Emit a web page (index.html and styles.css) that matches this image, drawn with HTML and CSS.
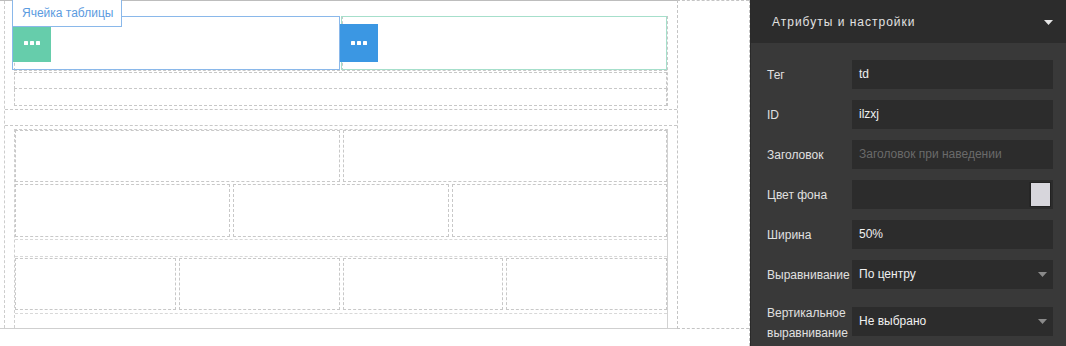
FILE: index.html
```html
<!DOCTYPE html>
<html lang="ru">
<head>
<meta charset="utf-8">
<title>Editor</title>
<link rel="stylesheet" href="styles.css">
</head>
<body>
<div class="app">
  <main class="canvas">
    <div class="frame">
      <div class="page">
        <div class="wrap">
          <section class="sec sec1">
            <div class="tbl tbl1">
              <div class="row row-main">
                <div class="cell">
                  <div class="sel sel-blue"></div>
                  <div class="tb tb-green">
                    <svg width="16" height="4" viewBox="0 0 16 4"><rect x="0" y="0" width="4" height="4" rx="0.6" fill="#fff"/><rect x="6" y="0" width="4" height="4" rx="0.6" fill="#fff"/><rect x="12" y="0" width="4" height="4" rx="0.6" fill="#fff"/></svg>
                  </div>
                </div>
                <div class="cell">
                  <div class="sel sel-green"></div>
                  <div class="tb tb-blue">
                    <svg width="16" height="4" viewBox="0 0 16 4"><rect x="0" y="0" width="4" height="4" rx="0.6" fill="#fff"/><rect x="6" y="0" width="4" height="4" rx="0.6" fill="#fff"/><rect x="12" y="0" width="4" height="4" rx="0.6" fill="#fff"/></svg>
                  </div>
                </div>
              </div>
              <div class="row-empty"></div>
              <div class="row-empty"></div>
            </div>
          </section>
          <section class="sec sec2">
            <div class="tbl tbl2">
              <div class="row r1">
                <div class="cell"></div><div class="cell"></div>
              </div>
              <div class="row r2">
                <div class="cell"></div><div class="cell"></div><div class="cell"></div>
              </div>
              <div class="row-blank"></div>
              <div class="row r3">
                <div class="cell"></div><div class="cell"></div><div class="cell"></div><div class="cell"></div>
              </div>
              <div class="row-tail"></div>
            </div>
          </section>
        </div>
      </div>
      <div class="gutter"></div>
    </div>
    <div class="badge">Ячейка таблицы</div>
  </main>

  <aside class="panel">
    <header class="panel-head">
      <span class="panel-title">Атрибуты и настройки</span>
      <svg class="caret-head" width="9" height="5" viewBox="0 0 9 5"><path d="M0 0 H9 L4.5 5 Z" fill="#e6e6e6"/></svg>
    </header>
    <div class="panel-body">
      <div class="field">
        <label class="lbl">Тег</label>
        <div class="inp">td</div>
      </div>
      <div class="field">
        <label class="lbl">ID</label>
        <div class="inp">ilzxj</div>
      </div>
      <div class="field">
        <label class="lbl">Заголовок</label>
        <div class="inp ph">Заголовок при наведении</div>
      </div>
      <div class="field">
        <label class="lbl">Цвет фона</label>
        <div class="inp color"><span class="swatch"></span></div>
      </div>
      <div class="field">
        <label class="lbl">Ширина</label>
        <div class="inp">50%</div>
      </div>
      <div class="field">
        <label class="lbl">Выравнивание</label>
        <div class="inp sel-inp"><span>По центру</span><svg width="9" height="5" viewBox="0 0 9 5"><path d="M0 0 H9 L4.5 5 Z" fill="#8a8a8a"/></svg></div>
      </div>
      <div class="field field-tall">
        <label class="lbl lbl-two">Вертикальное выравнивание</label>
        <div class="inp sel-inp"><span>Не выбрано</span><svg width="9" height="5" viewBox="0 0 9 5"><path d="M0 0 H9 L4.5 5 Z" fill="#8a8a8a"/></svg></div>
      </div>
    </div>
  </aside>
</div>
</body>
</html>
```

FILE: styles.css
```css
* { box-sizing: border-box; }
html, body { margin: 0; padding: 0; }
body {
  width: 1066px;
  height: 346px;
  overflow: hidden;
  font-family: "Liberation Sans", Arial, sans-serif;
  background: #fff;
}
.app {
  display: flex;
  width: 1066px;
  height: 346px;
}

/* ---------- canvas ---------- */
.canvas {
  position: relative;
  width: 750px;
  height: 346px;
  background: #fff;
  border-right: 1px dashed #c4c4c4;
}
.frame {
  display: flex;
  height: 329px;
}
.page {
  width: 677px;
  height: 329px;
  border-top: 1px solid #bdbdbd;
  border-bottom: 1px solid #cfcfcf;
  padding-left: 4px;
  display: flex;
  flex-direction: column;
}
.gutter {
  width: 72px;
  height: 329px;
  border-left: 1px dashed #c4c4c4;
  border-top: 1px dashed #c4c4c4;
  border-bottom: 1px dashed #c4c4c4;
}
.wrap {
  flex: 1;
  border-left: 1px dashed #cdcdcd;
  display: flex;
  flex-direction: column;
}
.sec1 {
  height: 109px;
  padding: 15px 9px 0 9px;
  border-bottom: 1px dashed #c8c8c8;
}
.sec2 {
  margin-top: 15px;
  flex: 1;
  padding: 3px 9px 0 9px;
  border-top: 1px dashed #c8c8c8;
}
.tbl {
  display: flex;
  flex-direction: column;
}
.tbl1 {
  height: 90px;
  border-right: 1px dashed #c8c8c8;
}
.row {
  display: flex;
  gap: 3px;
}
.cell {
  position: relative;
  flex: 1;
  border: 1px dashed #c8c8c8;
}
.row-main { height: 55px; gap: 2px; }
.row-empty {
  height: 17px;
  border: 1px dashed #c8c8c8;
  border-top: none;
}
.tbl1 .row-main + .row-empty {
  margin-top: 1px;
  border-top: 1px dashed #c8c8c8;
}

.tbl2 {
  height: 199px;
  border-left: 1px dashed #cfcfcf;
  border-right: 1px solid #d2d2d2;
  border-top: 1px dashed #cfcfcf;
}
.r1 { height: 52px; }
.r2 { height: 53px; margin-top: 2px; }
.r3 { height: 52px; margin-top: 1px; }
.row-blank {
  height: 18px;
  margin-top: 2px;
  border-top: 1px dashed #d8d8d8;
  border-bottom: 1px dashed #d8d8d8;
}
.row-tail {
  flex: 1;
  margin-top: 3px;
  border-top: 1px dashed #d8d8d8;
}

/* overlays */
.sel {
  position: absolute;
  top: -1px;
  bottom: 0;
  pointer-events: none;
}
.sel-blue {
  left: -3px;
  right: -1px;
  border: 1px solid #8ab8ea;
}
.sel-green {
  left: -2px;
  right: -1px;
  border: 1px solid #a6dfcb;
}
.tb {
  position: absolute;
  top: 7px;
  width: 38px;
  height: 38px;
  display: flex;
  align-items: center;
  justify-content: center;
}
.tb-green { left: -2px; background: #66cdab; }
.tb-blue { left: -3px; background: #3b97e3; }

.badge {
  position: absolute;
  left: 12px;
  top: 0;
  width: 110px;
  height: 27px;
  background: #fff;
  border: 1px solid #8ab8ea;
  border-top: none;
  color: #5b9be0;
  font-size: 12px;
  line-height: 26px;
  padding-left: 9px;
  white-space: nowrap;
}

/* ---------- panel ---------- */
.panel {
  width: 316px;
  height: 346px;
  background: #393939;
  color: #dedede;
  border-left: 1px solid #2a2a2a;
  display: flex;
  flex-direction: column;
}
.panel-head {
  height: 43px;
  background: #2c2c2c;
  display: flex;
  align-items: center;
  justify-content: space-between;
  padding: 0 13px 0 21px;
  flex-shrink: 0;
}
.panel-title {
  font-size: 12px;
  letter-spacing: 1px;
  color: #e2e2e2;
}
.caret-head { margin-top: 1px; }
.panel-body {
  padding: 17px 13px 0 16px;
  display: flex;
  flex-direction: column;
  gap: 11px;
}
.field {
  display: flex;
  align-items: center;
  min-height: 29px;
}
.lbl {
  width: 85px;
  flex-shrink: 0;
  font-size: 12px;
  color: #e0e0e0;
}
.inp {
  flex: 1;
  height: 29px;
  background: #2c2c2c;
  font-size: 12px;
  color: #f0f0f0;
  line-height: 29px;
  padding-left: 7px;
  white-space: nowrap;
}
.inp.ph { color: #6a6a6a; }
.inp.color {
  display: flex;
  justify-content: flex-end;
  padding: 2px 2px 2px 0;
}
.swatch {
  width: 21px;
  height: 25px;
  background: #d7d6dc;
  border: 1px solid #222;
  box-shadow: -1px 0 0 #262626;
}
.sel-inp {
  display: flex;
  align-items: center;
  justify-content: space-between;
  padding-right: 6px;
}
.lbl-two {
  line-height: 20px;
  padding-top: 3px;
  width: 85px;
}
```
